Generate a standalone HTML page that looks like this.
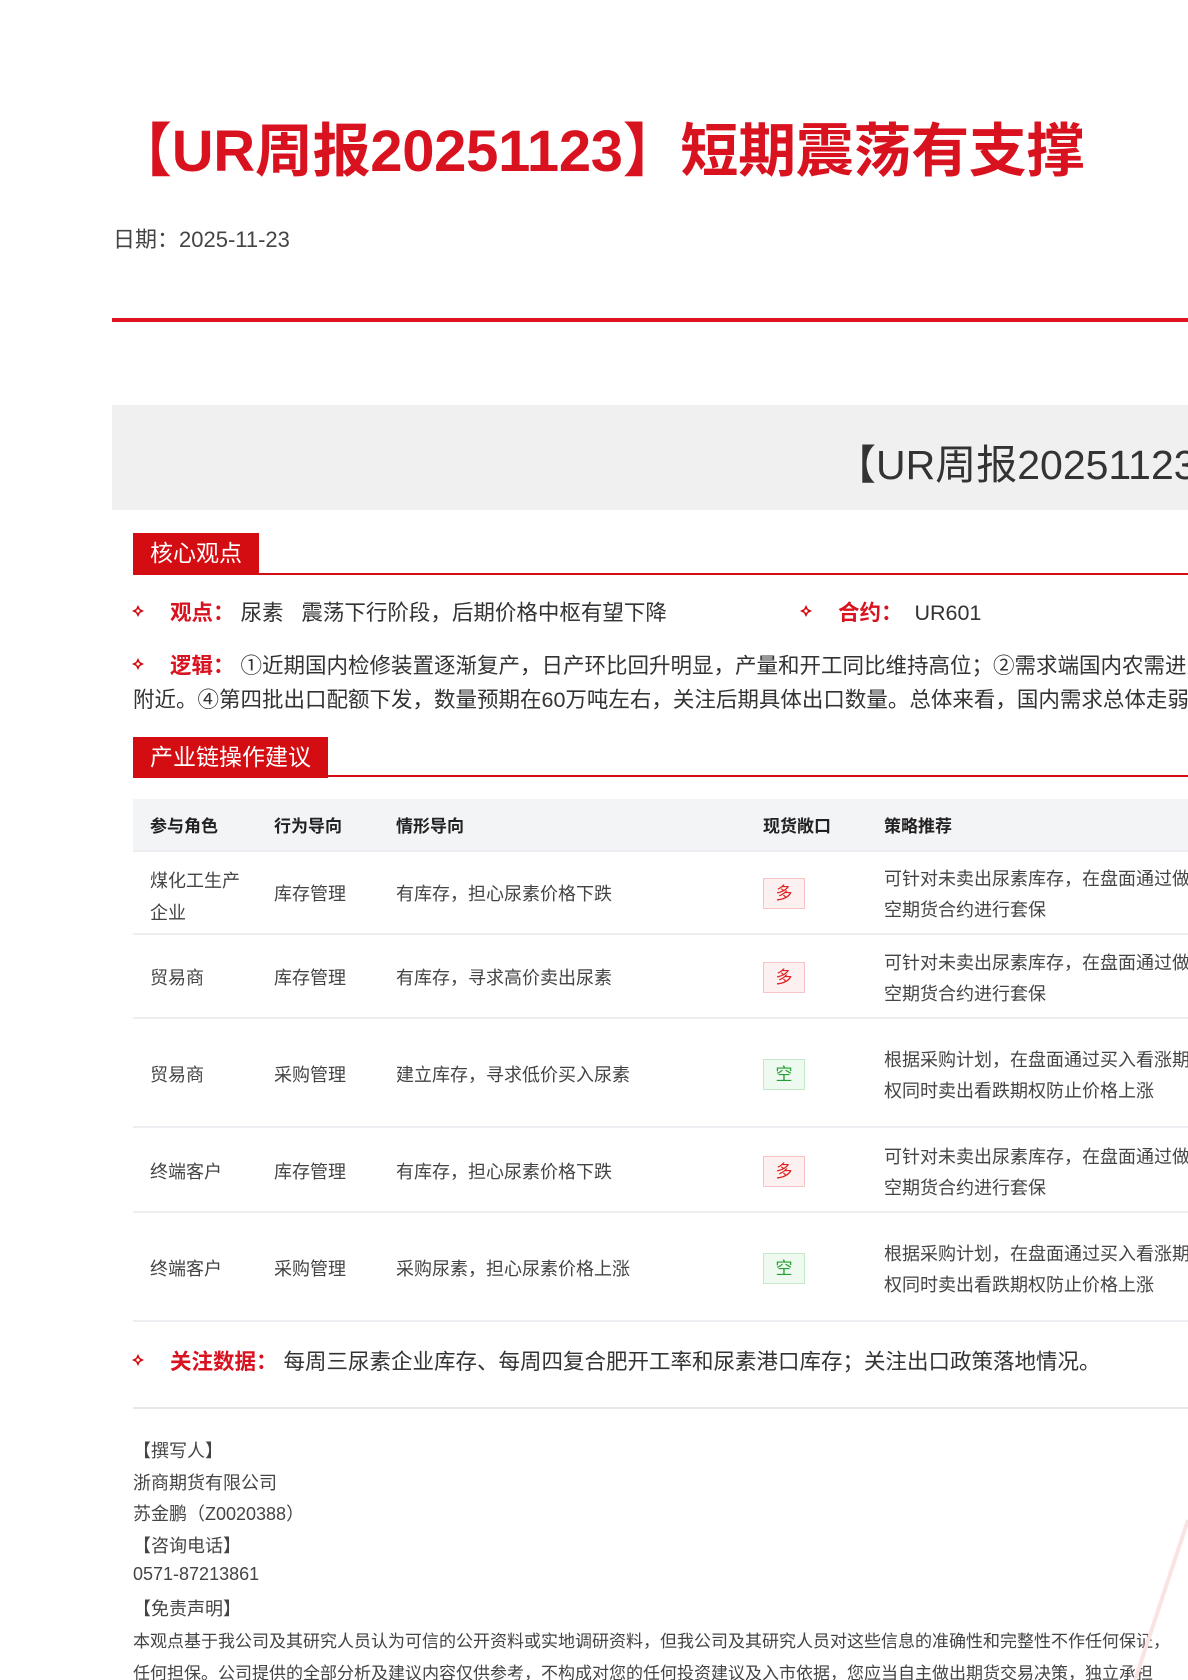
<!DOCTYPE html>
<html><head><meta charset="utf-8">
<style>
*{margin:0;padding:0;box-sizing:border-box}
html,body{width:1188px;height:1680px;overflow:hidden;background:#fff}
body{position:relative;font-family:"Liberation Sans","Noto Sans CJK SC",sans-serif;color:#333}
.a{position:absolute;white-space:nowrap}
.red{color:#d9121f}
.tag{position:absolute;background:#d40d12;color:#fff;font-size:23px;line-height:41px;padding:0 17px}
.rl{position:absolute;left:133px;right:0;height:2px;background:#d40d12}
.b{position:absolute;width:12px;height:12px}
.row{position:absolute;left:133px;right:0;border-bottom:2px solid #eceef1}
.td{position:absolute;font-size:18px;color:#444;white-space:nowrap;line-height:31px}
.badge{position:absolute;left:763px;width:42px;height:31px;font-size:17px;text-align:center;line-height:29px;border:1px solid}
.up{color:#e02020;background:#fdf0f0;border-color:#f6c4c4}
.dn{color:#22a132;background:#eef9ef;border-color:#c4e8c8}
.f{position:absolute;left:133px;font-size:18px;color:#444;white-space:nowrap}
</style></head><body>
<div class="a" style="left:114px;top:104px;font-size:58px;font-weight:bold;color:#d9121f;letter-spacing:-0.3px">【UR周报20251123】短期震荡有支撑</div>
<div class="a" style="left:113px;top:222px;font-size:22px;color:#444">日期：2025-11-23</div>
<div class="a" style="left:112px;right:0;top:318px;height:4px;background:#e0141e"></div>

<div class="a" style="left:112px;right:0;top:405px;height:105px;background:#f0f0f0"></div>
<div class="a" style="left:835px;top:431px;font-size:41px;color:#333">【UR周报20251123】短期震荡有支撑</div>

<div class="tag" style="left:133px;top:533px">核心观点</div>
<div class="rl" style="top:573px"></div>

<svg class="b" style="left:132px;top:605px" viewBox="0 0 12 12"><path d="M6 0L8 4L12 6L8 8L6 12L4 8L0 6L4 4Z" fill="#d40d12"/><circle cx="6" cy="6" r="1.6" fill="#fff"/></svg>
<div class="a" style="left:170px;top:598px;font-size:21.5px;line-height:30px"><span class="red" style="font-weight:bold">观点：</span>&nbsp;尿素&nbsp;&nbsp;&nbsp;震荡下行阶段，后期价格中枢有望下降</div>
<svg class="b" style="left:800px;top:605px" viewBox="0 0 12 12"><path d="M6 0L8 4L12 6L8 8L6 12L4 8L0 6L4 4Z" fill="#d40d12"/><circle cx="6" cy="6" r="1.6" fill="#fff"/></svg>
<div class="a" style="left:838px;top:598px;font-size:21.5px;line-height:30px"><span class="red" style="font-weight:bold">合约：</span>&nbsp;&nbsp;UR601</div>

<svg class="b" style="left:132px;top:658px" viewBox="0 0 12 12"><path d="M6 0L8 4L12 6L8 8L6 12L4 8L0 6L4 4Z" fill="#d40d12"/><circle cx="6" cy="6" r="1.6" fill="#fff"/></svg>
<div class="a" style="left:170px;top:651px;font-size:21.5px;line-height:30px"><span class="red" style="font-weight:bold">逻辑：</span>&nbsp;①近期国内检修装置逐渐复产，日产环比回升明显，产量和开工同比维持高位；②需求端国内农需进入淡季，</div>
<div class="a" style="left:133px;top:685px;font-size:21.5px;line-height:30px">附近。④第四批出口配额下发，数量预期在60万吨左右，关注后期具体出口数量。总体来看，国内需求总体走弱，</div>

<div class="tag" style="left:133px;top:737px">产业链操作建议</div>
<div class="rl" style="top:775px"></div>

<div class="a" style="left:133px;right:0;top:799px;height:53px;background:#f3f4f6;border-bottom:2px solid #eceef1"></div>
<div class="td" style="left:150px;top:811px;font-weight:bold;color:#222;font-size:17px">参与角色</div>
<div class="td" style="left:274px;top:811px;font-weight:bold;color:#222;font-size:17px">行为导向</div>
<div class="td" style="left:396px;top:811px;font-weight:bold;color:#222;font-size:17px">情形导向</div>
<div class="td" style="left:763px;top:811px;font-weight:bold;color:#222;font-size:17px">现货敞口</div>
<div class="td" style="left:884px;top:811px;font-weight:bold;color:#222;font-size:17px">策略推荐</div>

<div class="row" style="top:852px;height:83px"></div>
<div class="td" style="left:150px;top:865px;line-height:32px">煤化工生产<br>企业</div>
<div class="td" style="left:274px;top:879px">库存管理</div>
<div class="td" style="left:396px;top:879px">有库存，担心尿素价格下跌</div>
<div class="badge up" style="top:878px">多</div>
<div class="td" style="left:884px;top:864px">可针对未卖出尿素库存，在盘面通过做<br>空期货合约进行套保</div>

<div class="row" style="top:935px;height:84px"></div>
<div class="td" style="left:150px;top:963px">贸易商</div>
<div class="td" style="left:274px;top:963px">库存管理</div>
<div class="td" style="left:396px;top:963px">有库存，寻求高价卖出尿素</div>
<div class="badge up" style="top:962px">多</div>
<div class="td" style="left:884px;top:948px">可针对未卖出尿素库存，在盘面通过做<br>空期货合约进行套保</div>

<div class="row" style="top:1019px;height:109px"></div>
<div class="td" style="left:150px;top:1060px">贸易商</div>
<div class="td" style="left:274px;top:1060px">采购管理</div>
<div class="td" style="left:396px;top:1060px">建立库存，寻求低价买入尿素</div>
<div class="badge dn" style="top:1059px">空</div>
<div class="td" style="left:884px;top:1045px">根据采购计划，在盘面通过买入看涨期<br>权同时卖出看跌期权防止价格上涨</div>

<div class="row" style="top:1128px;height:85px"></div>
<div class="td" style="left:150px;top:1157px">终端客户</div>
<div class="td" style="left:274px;top:1157px">库存管理</div>
<div class="td" style="left:396px;top:1157px">有库存，担心尿素价格下跌</div>
<div class="badge up" style="top:1156px">多</div>
<div class="td" style="left:884px;top:1142px">可针对未卖出尿素库存，在盘面通过做<br>空期货合约进行套保</div>

<div class="row" style="top:1213px;height:109px"></div>
<div class="td" style="left:150px;top:1254px">终端客户</div>
<div class="td" style="left:274px;top:1254px">采购管理</div>
<div class="td" style="left:396px;top:1254px">采购尿素，担心尿素价格上涨</div>
<div class="badge dn" style="top:1253px">空</div>
<div class="td" style="left:884px;top:1239px">根据采购计划，在盘面通过买入看涨期<br>权同时卖出看跌期权防止价格上涨</div>

<svg class="b" style="left:132px;top:1354px" viewBox="0 0 12 12"><path d="M6 0L8 4L12 6L8 8L6 12L4 8L0 6L4 4Z" fill="#d40d12"/><circle cx="6" cy="6" r="1.6" fill="#fff"/></svg>
<div class="a" style="left:170px;top:1347px;font-size:21.5px;line-height:30px"><span class="red" style="font-weight:bold">关注数据：</span>&nbsp;每周三尿素企业库存、每周四复合肥开工率和尿素港口库存；关注出口政策落地情况。</div>

<div class="a" style="left:133px;right:0;top:1407px;height:2px;background:#e8e8e8"></div>

<div class="f" style="top:1437px">【撰写人】</div>
<div class="f" style="top:1469px">浙商期货有限公司</div>
<div class="f" style="top:1500px">苏金鹏（Z0020388）</div>
<div class="f" style="top:1532px">【咨询电话】</div>
<div class="f" style="top:1564px">0571-87213861</div>
<div class="f" style="top:1595px">【免责声明】</div>
<div class="f" style="top:1627px;font-size:17px">本观点基于我公司及其研究人员认为可信的公开资料或实地调研资料，但我公司及其研究人员对这些信息的准确性和完整性不作任何保证，</div>
<div class="f" style="top:1659px;font-size:17px">任何担保。公司提供的全部分析及建议内容仅供参考，不构成对您的任何投资建议及入市依据，您应当自主做出期货交易决策，独立承担</div>
<svg class="a" style="left:1130px;top:1500px" width="58" height="180" viewBox="0 0 58 180"><path d="M58 20L5 180" stroke="#fae3e3" stroke-width="4" fill="none"/></svg>
</body></html>
